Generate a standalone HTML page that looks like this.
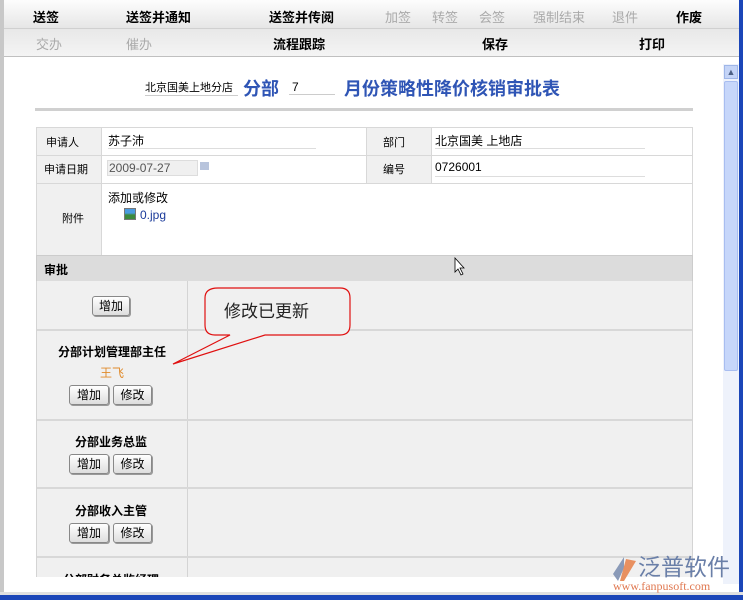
<!DOCTYPE html>
<html><head><meta charset="utf-8"><style>
*{margin:0;padding:0;box-sizing:border-box}
body{width:743px;height:600px;overflow:hidden;background:#fff;font-family:"Liberation Sans","Noto Sans CJK SC",sans-serif;font-size:12px;color:#000;position:relative}
.a{position:absolute}
.tb{left:4px;width:735px;background:linear-gradient(#fdfdfd,#e6e6e6);}
.t{position:absolute;font-size:13px;font-weight:bold;white-space:nowrap}
.g{color:#aaa;font-weight:normal}
.c{position:absolute;background:#f0f0f0;border:1px solid #d8d8d8}
.w{position:absolute;background:#fff;border:1px solid #d8d8d8}
.btn{position:absolute;height:20px;border:1px solid #888;border-radius:3px;background:linear-gradient(#fff,#ddd);font-size:12px;text-align:center;line-height:18px;box-shadow:1px 1px 0 #999}
.lbl{position:absolute;font-weight:bold;white-space:nowrap}
</style></head><body>
<div class="a" style="left:0;top:0;width:4px;height:600px;background:#c8c8c8"></div>
<div class="a" style="left:739px;top:0;width:4px;height:600px;background:#1b46b8"></div>
<div class="a" style="left:0;top:592px;width:743px;height:3px;background:#e0e0e0"></div>
<div class="a" style="left:0;top:595px;width:743px;height:5px;background:#1b46b8"></div>
<div class="a tb" style="top:0;height:29px;border-bottom:1px solid #d0d0d0"></div>
<div class="a tb" style="top:29px;height:28px;border-bottom:1px solid #c0c0c0;background:linear-gradient(#e8e8e8,#f4f4f4)"></div>
<span class="t" style="left:33px;top:7px">送签</span>
<span class="t" style="left:126px;top:7px">送签并通知</span>
<span class="t" style="left:269px;top:7px">送签并传阅</span>
<span class="t g" style="left:385px;top:7px">加签</span>
<span class="t g" style="left:432px;top:7px">转签</span>
<span class="t g" style="left:479px;top:7px">会签</span>
<span class="t g" style="left:533px;top:7px">强制结束</span>
<span class="t g" style="left:612px;top:7px">退件</span>
<span class="t" style="left:676px;top:7px">作废</span>
<span class="t g" style="left:36px;top:34px">交办</span>
<span class="t g" style="left:126px;top:34px">催办</span>
<span class="t" style="left:273px;top:34px">流程跟踪</span>
<span class="t" style="left:482px;top:34px">保存</span>
<span class="t" style="left:639px;top:34px">打印</span>
<!-- scrollbar -->
<div class="a" style="left:723px;top:64px;width:16px;height:520px;background:#eef2fb"></div>
<div class="a" style="left:724px;top:65px;width:14px;height:14px;background:#c4d4f7;border:1px solid #9fb6e8;font-size:9px;text-align:center;line-height:12px;color:#4d6185">▲</div>
<div class="a" style="left:724px;top:81px;width:14px;height:290px;background:#c6d6fa;border:1px solid #a8bdf0;border-radius:2px"></div>
<!-- title -->
<div class="a" style="left:145px;top:79px;font-size:11px;border-bottom:1px solid #ccc;width:93px;white-space:nowrap">北京国美上地分店</div>
<div class="a" style="left:243px;top:75px;font-size:18px;font-weight:bold;color:#2f55b5">分部</div>
<div class="a" style="left:289px;top:80px;font-size:12px;border-bottom:1px solid #ccc;width:46px;padding-left:3px">7</div>
<div class="a" style="left:344px;top:75px;font-size:18px;font-weight:bold;color:#2f55b5;white-space:nowrap">月份策略性降价核销审批表</div>
<div class="a" style="left:35px;top:108px;width:658px;height:3px;background:#d0d0d0"></div>
<!-- form table -->
<div class="c" style="left:36px;top:127px;width:66px;height:29px"></div><div class="a" style="left:46px;top:134px;font-size:11px">申请人</div>
<div class="w" style="left:101px;top:127px;width:266px;height:29px"></div><div class="a" style="left:108px;top:132px">苏子沛</div><div class="a" style="left:108px;top:148px;width:208px;height:1px;background:#ddd"></div>
<div class="c" style="left:366px;top:127px;width:66px;height:29px"></div><div class="a" style="left:383px;top:134px;font-size:11px">部门</div>
<div class="w" style="left:431px;top:127px;width:262px;height:29px"></div><div class="a" style="left:435px;top:132px">北京国美 上地店</div><div class="a" style="left:435px;top:148px;width:210px;height:1px;background:#ddd"></div>
<div class="c" style="left:36px;top:155px;width:66px;height:29px"></div><div class="a" style="left:44px;top:161px;font-size:11px">申请日期</div>
<div class="w" style="left:101px;top:155px;width:266px;height:29px"></div><div class="a" style="left:107px;top:160px;width:91px;height:16px;background:#f0f0f0;border:1px solid #ddd;color:#555;padding-left:1px">2009-07-27</div><div class="a" style="left:200px;top:162px;width:9px;height:8px;background:#b8c4dc"></div>
<div class="c" style="left:366px;top:155px;width:66px;height:29px"></div><div class="a" style="left:383px;top:161px;font-size:11px">编号</div>
<div class="w" style="left:431px;top:155px;width:262px;height:29px"></div><div class="a" style="left:435px;top:160px">0726001</div><div class="a" style="left:435px;top:176px;width:210px;height:1px;background:#ddd"></div>
<div class="c" style="left:36px;top:183px;width:66px;height:73px"></div><div class="a" style="left:62px;top:210px;font-size:11px">附件</div>
<div class="w" style="left:101px;top:183px;width:592px;height:73px"></div>
<div class="a" style="left:108px;top:189px">添加或修改</div>
<div class="a" style="left:124px;top:208px;width:12px;height:12px;background:linear-gradient(#4a9be0 40%,#3c8a3c 60%);border:1px solid #777"></div>
<div class="a" style="left:140px;top:208px;color:#1a3a9a">0.jpg</div>
<div class="a" style="left:36px;top:255px;width:657px;height:27px;background:#dcdcdc;border:1px solid #ccc"></div>
<div class="lbl" style="left:44px;top:261px">审批</div>
<!-- approval rows -->
<div class="a" style="left:36px;top:281px;width:657px;height:296px;background:#f0f0f0;border-left:1px solid #d4d4d4;border-right:1px solid #d4d4d4;overflow:hidden">
<div class="a" style="left:150px;top:0;width:1px;height:300px;background:#d4d4d4"></div>
<div class="a" style="left:0;top:48px;width:657px;height:2px;background:#d8d8d8"></div>
<div class="a" style="left:0;top:138px;width:657px;height:2px;background:#d8d8d8"></div>
<div class="a" style="left:0;top:206px;width:657px;height:2px;background:#d8d8d8"></div>
<div class="a" style="left:0;top:275px;width:657px;height:2px;background:#d8d8d8"></div>
<div class="lbl" style="left:26px;top:290px">分部财务总监经理</div>
</div>
<div class="btn" style="left:92px;top:296px;width:38px">增加</div>
<div class="lbl" style="left:58px;top:343px">分部计划管理部主任</div>
<div class="a" style="left:100px;top:364px;color:#e08a2a">王飞</div>
<div class="btn" style="left:69px;top:385px;width:40px">增加</div><div class="btn" style="left:113px;top:385px;width:39px">修改</div>
<div class="lbl" style="left:75px;top:433px">分部业务总监</div>
<div class="btn" style="left:69px;top:454px;width:40px">增加</div><div class="btn" style="left:113px;top:454px;width:39px">修改</div>
<div class="lbl" style="left:75px;top:502px">分部收入主管</div>
<div class="btn" style="left:69px;top:523px;width:40px">增加</div><div class="btn" style="left:113px;top:523px;width:39px">修改</div>
<!-- callout -->
<svg class="a" style="left:0;top:0" width="743" height="600">
<path d="M218,288 H340 Q350,288 350,298 V325 Q350,335 340,335 H265 L173,364 L230,335 H215 Q205,335 205,325 V298 Q205,288 218,288 Z" fill="#f0f0f0" stroke="#e01010" stroke-width="1.2"/>
<path d="M455,258 v14 l3,-3 l3,6 l2,-1 l-3,-6 h4 z" fill="#fff" stroke="#000" stroke-width="0.8"/>
</svg>
<!-- logo -->
<svg class="a" style="left:612px;top:556px" width="26" height="26"><path d="M12,1 L1,18 L6,25 L12,12 Z" fill="#8a9ab8"/><path d="M14,3 L24,5 L12,25 L8,25 Z" fill="#e89060"/></svg>
<div class="a" style="left:224px;top:297px;font-size:17px;color:#222">修改已更新</div>
<div class="a" style="left:638px;top:554px;font-size:23px;line-height:26px;color:#6a7fa8;white-space:nowrap">泛普软件</div>
<div class="a" style="left:613px;top:580px;font-size:12px;line-height:12px;color:#e07850;font-family:'Liberation Serif',serif;white-space:nowrap">www.fanpusoft.com</div>
</body></html>
